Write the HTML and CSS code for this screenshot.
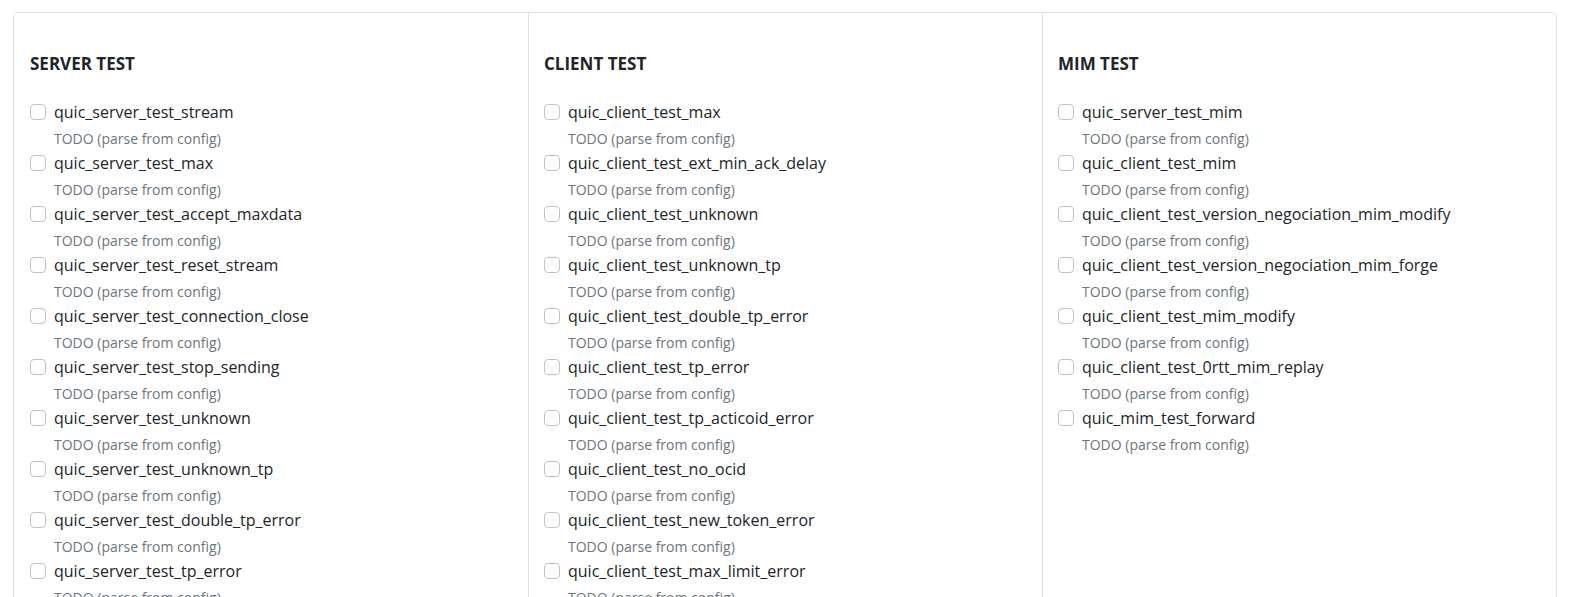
FILE: index.html
```html
<!DOCTYPE html>
<html lang="en">
<head>
<meta charset="utf-8">
<title>Tests</title>
<link rel="stylesheet" href="styles.css">
</head>
<body>
<div class="card">
  <section class="col">
    <h5 class="col-title">SERVER TEST</h5>
    <ul class="tests">
      <li class="test"><label class="test-row"><input type="checkbox" class="box"><span class="name">quic_server_test_stream</span></label><div class="desc">TODO (parse from config)</div></li>
      <li class="test"><label class="test-row"><input type="checkbox" class="box"><span class="name">quic_server_test_max</span></label><div class="desc">TODO (parse from config)</div></li>
      <li class="test"><label class="test-row"><input type="checkbox" class="box"><span class="name">quic_server_test_accept_maxdata</span></label><div class="desc">TODO (parse from config)</div></li>
      <li class="test"><label class="test-row"><input type="checkbox" class="box"><span class="name">quic_server_test_reset_stream</span></label><div class="desc">TODO (parse from config)</div></li>
      <li class="test"><label class="test-row"><input type="checkbox" class="box"><span class="name">quic_server_test_connection_close</span></label><div class="desc">TODO (parse from config)</div></li>
      <li class="test"><label class="test-row"><input type="checkbox" class="box"><span class="name">quic_server_test_stop_sending</span></label><div class="desc">TODO (parse from config)</div></li>
      <li class="test"><label class="test-row"><input type="checkbox" class="box"><span class="name">quic_server_test_unknown</span></label><div class="desc">TODO (parse from config)</div></li>
      <li class="test"><label class="test-row"><input type="checkbox" class="box"><span class="name">quic_server_test_unknown_tp</span></label><div class="desc">TODO (parse from config)</div></li>
      <li class="test"><label class="test-row"><input type="checkbox" class="box"><span class="name">quic_server_test_double_tp_error</span></label><div class="desc">TODO (parse from config)</div></li>
      <li class="test"><label class="test-row"><input type="checkbox" class="box"><span class="name">quic_server_test_tp_error</span></label><div class="desc">TODO (parse from config)</div></li>
    </ul>
  </section>
  <section class="col">
    <h5 class="col-title">CLIENT TEST</h5>
    <ul class="tests">
      <li class="test"><label class="test-row"><input type="checkbox" class="box"><span class="name">quic_client_test_max</span></label><div class="desc">TODO (parse from config)</div></li>
      <li class="test"><label class="test-row"><input type="checkbox" class="box"><span class="name">quic_client_test_ext_min_ack_delay</span></label><div class="desc">TODO (parse from config)</div></li>
      <li class="test"><label class="test-row"><input type="checkbox" class="box"><span class="name">quic_client_test_unknown</span></label><div class="desc">TODO (parse from config)</div></li>
      <li class="test"><label class="test-row"><input type="checkbox" class="box"><span class="name">quic_client_test_unknown_tp</span></label><div class="desc">TODO (parse from config)</div></li>
      <li class="test"><label class="test-row"><input type="checkbox" class="box"><span class="name">quic_client_test_double_tp_error</span></label><div class="desc">TODO (parse from config)</div></li>
      <li class="test"><label class="test-row"><input type="checkbox" class="box"><span class="name">quic_client_test_tp_error</span></label><div class="desc">TODO (parse from config)</div></li>
      <li class="test"><label class="test-row"><input type="checkbox" class="box"><span class="name">quic_client_test_tp_acticoid_error</span></label><div class="desc">TODO (parse from config)</div></li>
      <li class="test"><label class="test-row"><input type="checkbox" class="box"><span class="name">quic_client_test_no_ocid</span></label><div class="desc">TODO (parse from config)</div></li>
      <li class="test"><label class="test-row"><input type="checkbox" class="box"><span class="name">quic_client_test_new_token_error</span></label><div class="desc">TODO (parse from config)</div></li>
      <li class="test"><label class="test-row"><input type="checkbox" class="box"><span class="name">quic_client_test_max_limit_error</span></label><div class="desc">TODO (parse from config)</div></li>
    </ul>
  </section>
  <section class="col">
    <h5 class="col-title">MIM TEST</h5>
    <ul class="tests">
      <li class="test"><label class="test-row"><input type="checkbox" class="box"><span class="name">quic_server_test_mim</span></label><div class="desc">TODO (parse from config)</div></li>
      <li class="test"><label class="test-row"><input type="checkbox" class="box"><span class="name">quic_client_test_mim</span></label><div class="desc">TODO (parse from config)</div></li>
      <li class="test"><label class="test-row"><input type="checkbox" class="box"><span class="name">quic_client_test_version_negociation_mim_modify</span></label><div class="desc">TODO (parse from config)</div></li>
      <li class="test"><label class="test-row"><input type="checkbox" class="box"><span class="name">quic_client_test_version_negociation_mim_forge</span></label><div class="desc">TODO (parse from config)</div></li>
      <li class="test"><label class="test-row"><input type="checkbox" class="box"><span class="name">quic_client_test_mim_modify</span></label><div class="desc">TODO (parse from config)</div></li>
      <li class="test"><label class="test-row"><input type="checkbox" class="box"><span class="name">quic_client_test_0rtt_mim_replay</span></label><div class="desc">TODO (parse from config)</div></li>
      <li class="test"><label class="test-row"><input type="checkbox" class="box"><span class="name">quic_mim_test_forward</span></label><div class="desc">TODO (parse from config)</div></li>
    </ul>
  </section>
</div>
</body>
</html>
```
FILE: styles.css
```css
html {
  overflow: hidden;
}
body {
  margin: 0;
  padding: 12px 16px 12px 13px;
  background: #fff;
  font-family: "Open Sans", "Noto Sans", sans-serif;
  color: #212529;
}
.card {
  display: grid;
  grid-template-columns: repeat(3, 1fr);
  border: 1px solid #dee2e6;
  border-radius: 5px;
  background: #fff;
}
.col {
  padding: 40px 16px 16px 16px;
  min-width: 0;
}
.col + .col {
  border-left: 1px solid #dee2e6;
  padding-left: 15px;
}
.col-title {
  margin: 0 0 25px 0;
  font-size: 17px;
  font-weight: 700;
  line-height: 21.6px;
  color: #212529;
}
.tests {
  list-style: none;
  margin: 0;
  padding: 0;
}
.test {
  margin-bottom: 2px;
}
.test-row {
  display: flex;
  align-items: center;
  gap: 8px;
  height: 24px;
}
.box {
  appearance: none;
  -webkit-appearance: none;
  width: 16px;
  height: 16px;
  margin: 0;
  border: 1px solid #bfc3c7;
  border-radius: 4px;
  background: #fff;
  flex: none;
}
.name {
  font-size: 16px;
  line-height: 24px;
  color: #212529;
}
.desc {
  margin: 4px 0 0 24px;
  font-size: 14px;
  line-height: 21px;
  color: #6c757d;
}
```
